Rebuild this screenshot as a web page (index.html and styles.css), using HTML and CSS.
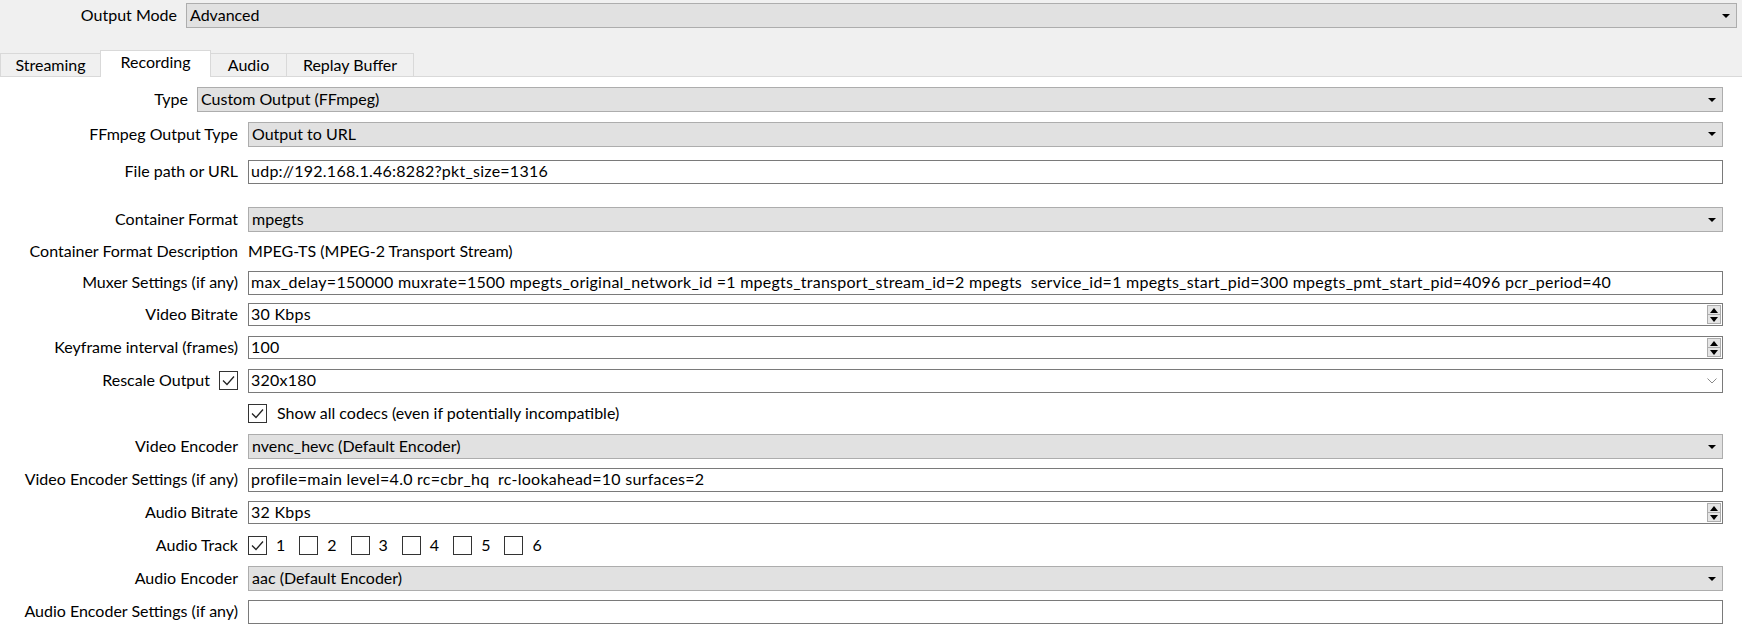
FILE: index.html
```html
<!DOCTYPE html>
<html>
<head>
<meta charset="utf-8">
<link rel="stylesheet" href="styles.css">
</head>
<body>
<div class="top">
  <div class="mode-row">
    <span class="mode-label">Output Mode</span>
    <div class="combo mode-combo"><span class="val">Advanced</span><span class="drop"></span></div>
  </div>
  <div class="tabs">
    <div class="tab tab-streaming">Streaming</div>
    <div class="tab tab-recording active">Recording</div>
    <div class="tab tab-audio">Audio</div>
    <div class="tab tab-replay">Replay Buffer</div>
  </div>
</div>
<div class="panel">
  <div class="type-row">
    <span class="lbl">Type</span>
    <div class="combo"><span class="val">Custom Output (FFmpeg)</span><span class="drop"></span></div>
  </div>
  <div class="form">
    <div class="row r-ffmpeg">
      <span class="lbl">FFmpeg Output Type</span>
      <div class="combo"><span class="val">Output to URL</span><span class="drop"></span></div>
    </div>
    <div class="row r-file">
      <span class="lbl">File path or URL</span>
      <div class="input"><span class="val">udp://192.168.1.46:8282?pkt_size=1316</span></div>
    </div>
    <div class="row r-container">
      <span class="lbl">Container Format</span>
      <div class="combo"><span class="val">mpegts</span><span class="drop"></span></div>
    </div>
    <div class="row r-short">
      <span class="lbl">Container Format Description</span>
      <span class="desc">MPEG-TS (MPEG-2 Transport Stream)</span>
    </div>
    <div class="row r-short">
      <span class="lbl">Muxer Settings (if any)</span>
      <div class="input"><span class="val">max_delay=150000 muxrate=1500 mpegts_original_network_id =1 mpegts_transport_stream_id=2 mpegts&nbsp; service_id=1 mpegts_start_pid=300 mpegts_pmt_start_pid=4096 pcr_period=40</span></div>
    </div>
    <div class="row">
      <span class="lbl">Video Bitrate</span>
      <div class="input spin"><span class="val">30 Kbps</span><span class="spin-btns"><span class="sb up"><i></i></span><span class="sb down"><i></i></span></span></div>
    </div>
    <div class="row">
      <span class="lbl">Keyframe interval (frames)</span>
      <div class="input spin"><span class="val">100</span><span class="spin-btns"><span class="sb up"><i></i></span><span class="sb down"><i></i></span></span></div>
    </div>
    <div class="row">
      <span class="lbl lbl-check">Rescale Output <span class="check on"><svg viewBox="0 0 19 19" width="19" height="19"><polyline points="4,9.5 8,13.5 15,5.5" fill="none" stroke="#222" stroke-width="1.3"/></svg></span></span>
      <div class="input edit-combo"><span class="val">320x180</span><svg class="chev" viewBox="0 0 10 6" width="10" height="6"><polyline points="0.5,0.5 5,5 9.5,0.5" fill="none" stroke="#8a8a8a" stroke-width="1"/></svg></div>
    </div>
    <div class="row">
      <span class="lbl"></span>
      <span class="checkline"><span class="check on"><svg viewBox="0 0 19 19" width="19" height="19"><polyline points="4,9.5 8,13.5 15,5.5" fill="none" stroke="#222" stroke-width="1.3"/></svg></span><span>Show all codecs (even if potentially incompatible)</span></span>
    </div>
    <div class="row">
      <span class="lbl">Video Encoder</span>
      <div class="combo"><span class="val">nvenc_hevc (Default Encoder)</span><span class="drop"></span></div>
    </div>
    <div class="row">
      <span class="lbl">Video Encoder Settings (if any)</span>
      <div class="input"><span class="val">profile=main level=4.0 rc=cbr_hq&nbsp; rc-lookahead=10 surfaces=2</span></div>
    </div>
    <div class="row">
      <span class="lbl">Audio Bitrate</span>
      <div class="input spin"><span class="val">32 Kbps</span><span class="spin-btns"><span class="sb up"><i></i></span><span class="sb down"><i></i></span></span></div>
    </div>
    <div class="row">
      <span class="lbl">Audio Track</span>
      <div class="tracks">
        <span class="track"><span class="check on"><svg viewBox="0 0 19 19" width="19" height="19"><polyline points="4,9.5 8,13.5 15,5.5" fill="none" stroke="#222" stroke-width="1.3"/></svg></span><span>1</span></span>
        <span class="track"><span class="check"></span><span>2</span></span>
        <span class="track"><span class="check"></span><span>3</span></span>
        <span class="track"><span class="check"></span><span>4</span></span>
        <span class="track"><span class="check"></span><span>5</span></span>
        <span class="track"><span class="check"></span><span>6</span></span>
      </div>
    </div>
    <div class="row">
      <span class="lbl">Audio Encoder</span>
      <div class="combo"><span class="val">aac (Default Encoder)</span><span class="drop"></span></div>
    </div>
    <div class="row">
      <span class="lbl">Audio Encoder Settings (if any)</span>
      <div class="input"><span class="val"></span></div>
    </div>
  </div>
</div>
</body>
</html>
```

FILE: styles.css
```css
* { box-sizing: border-box; }

body {
  margin: 0;
  width: 1742px;
  height: 644px;
  overflow: hidden;
  background: #ffffff;
  color: #000000;
  font-family: "Lato", "Open Sans", sans-serif;
  font-size: 16px;
  line-height: 1.3;
}

.top {
  background: #f0f0f0;
  height: 77px;
  display: flex;
  flex-direction: column;
}

.mode-row {
  display: flex;
  align-items: center;
  column-gap: 9px;
  margin-top: 3px;
  height: 25px;
}

.mode-label {
  width: 177px;
  text-align: right;
}

.mode-combo {
  width: 1551px;
}

.tabs {
  margin-top: auto;
  display: flex;
  align-items: flex-end;
  height: 27px;
  border-bottom: 1px solid #d9d9d9;
}

.tab {
  height: 23px;
  display: flex;
  align-items: center;
  justify-content: center;
  background: #f0f0f0;
  border: 1px solid #d9d9d9;
  border-bottom: none;
  margin-right: -1px;
  padding-top: 1px;
}

.tab.active {
  height: 27px;
  background: #ffffff;
  margin-bottom: -1px;
  position: relative;
  z-index: 1;
  padding-top: 0;
  padding-bottom: 3px;
}

.tab-streaming { width: 101px; }
.tab-recording { width: 111px; }
.tab-audio { width: 77px; }
.tab-replay { width: 128px; }

.panel {
  padding-top: 6px;
}

.type-row {
  display: grid;
  grid-template-columns: 188px 1526px;
  column-gap: 9px;
  align-items: center;
  height: 33px;
}

.lbl {
  text-align: right;
  white-space: nowrap;
}

.form {
  display: flex;
  flex-direction: column;
}

.row {
  display: grid;
  grid-template-columns: 238px 1475px;
  column-gap: 10px;
  align-items: center;
  height: 33px;
}

.r-ffmpeg { margin-top: 1.5px; }
.r-file { margin-top: 4.5px; }
.r-container { margin-top: 15px; }
.r-short { height: 31px; }

.combo {
  height: 25px;
  background: #e1e1e1;
  border: 1px solid #adadad;
  display: flex;
  align-items: center;
  padding-left: 3px;
  padding-right: 6px;
}

.val {
  flex: 1;
  white-space: nowrap;
}

.input .val {
  letter-spacing: 0.25px;
}

.drop {
  width: 0;
  height: 0;
  border-left: 4px solid transparent;
  border-right: 4px solid transparent;
  border-top: 4px solid #000000;
}

.input {
  height: 24px;
  background: #ffffff;
  border: 1px solid #7a7a7a;
  display: flex;
  align-items: center;
  padding-left: 2px;
}

.spin {
  height: 23px;
  padding-right: 1px;
}

.spin-btns {
  display: flex;
  flex-direction: column;
  width: 14px;
  height: 19px;
}

.sb {
  flex: 1;
  display: flex;
  align-items: center;
  justify-content: center;
  background: #e5e5e5;
  border: 1px solid #adadad;
}

.sb.down { border-top: none; }

.sb i {
  width: 0;
  height: 0;
  border-left: 4.5px solid transparent;
  border-right: 4.5px solid transparent;
}

.sb.up i { border-bottom: 5px solid #000000; }
.sb.down i { border-top: 5px solid #000000; }

.edit-combo {
  padding-right: 5px;
}

.chev {
  display: block;
}

.desc {
  white-space: nowrap;
}

.lbl-check {
  display: flex;
  align-items: center;
  justify-content: flex-end;
  column-gap: 9px;
}

.check {
  width: 19px;
  height: 19px;
  border: 1px solid #333333;
  background: #ffffff;
  display: inline-flex;
  flex: none;
}

.check svg {
  margin: -1px;
}

.checkline {
  display: flex;
  align-items: center;
  column-gap: 10px;
}

.tracks {
  display: flex;
  align-items: center;
  column-gap: 14px;
}

.track {
  display: flex;
  align-items: center;
  column-gap: 9px;
}
```
